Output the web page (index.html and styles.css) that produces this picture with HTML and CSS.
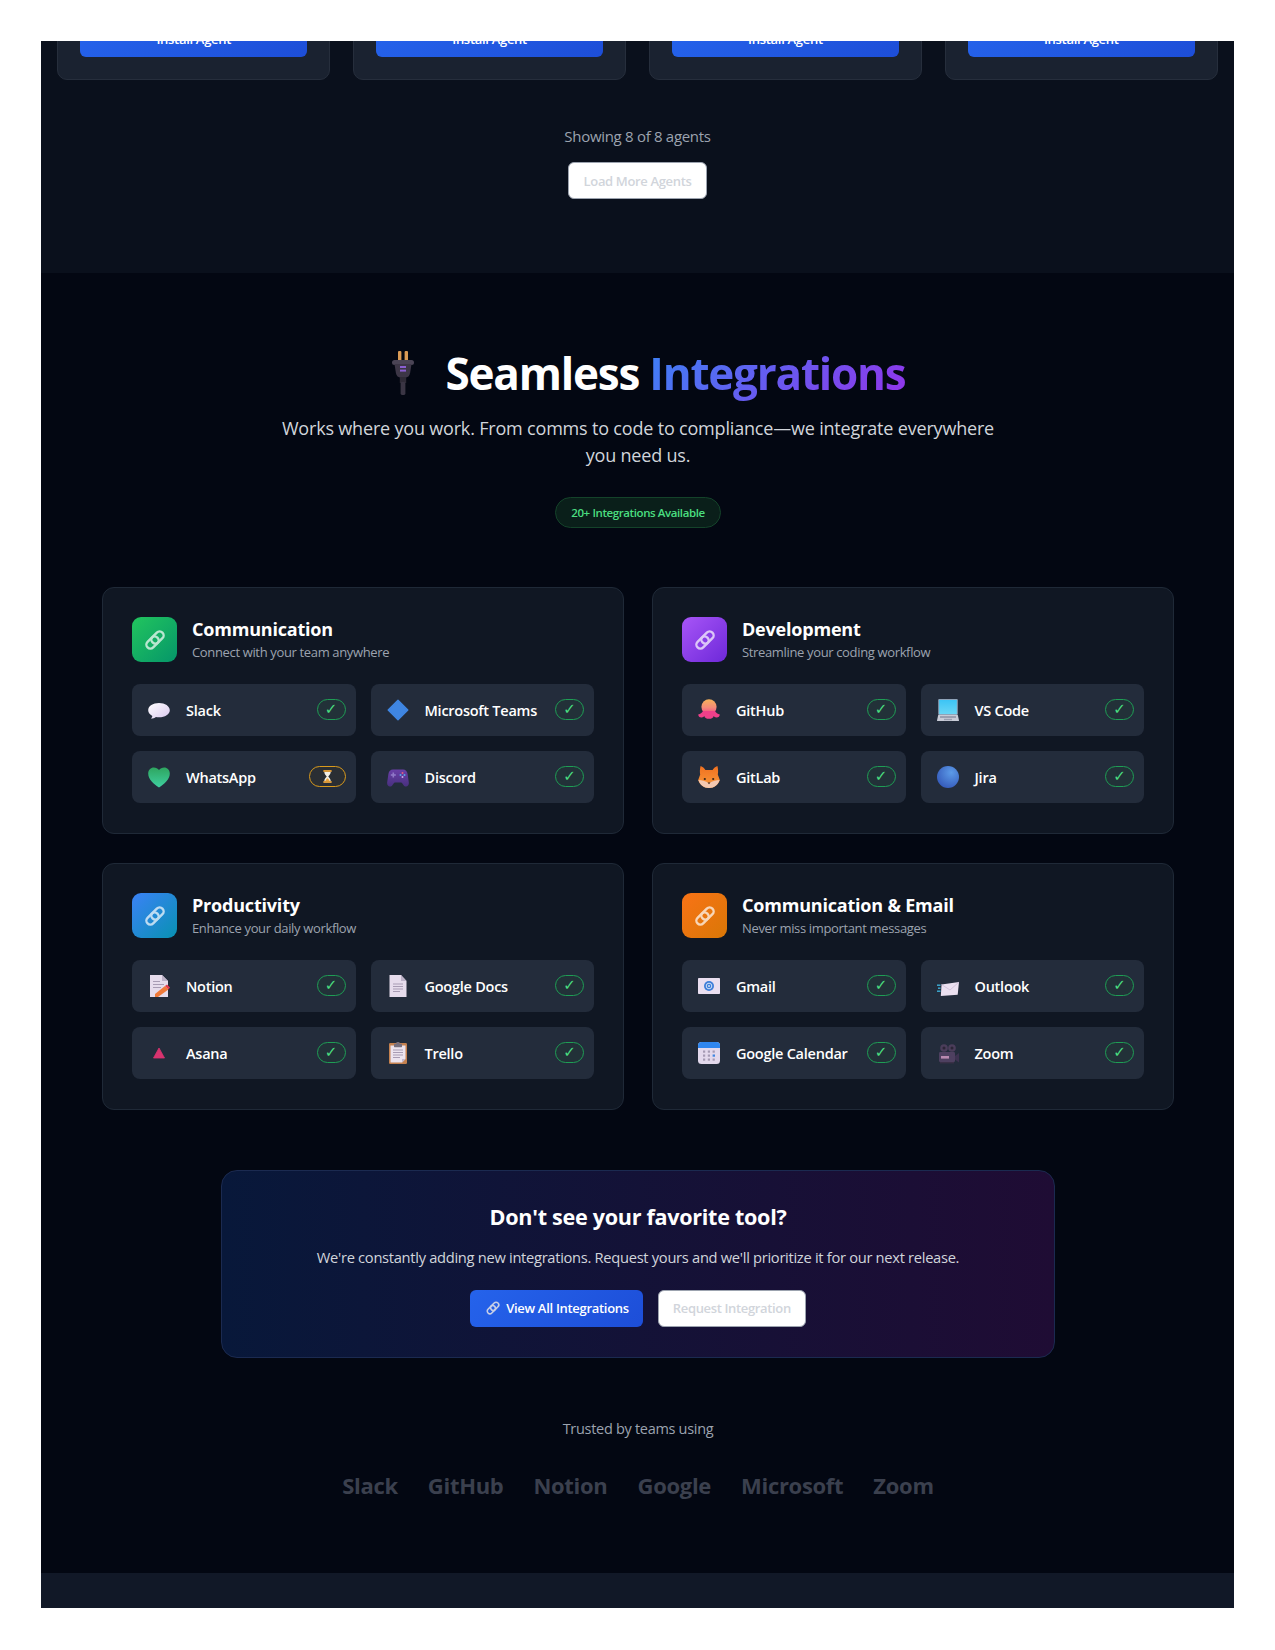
FILE: index.html
```html
<!DOCTYPE html>
<html lang="en">
<head>
<meta charset="UTF-8">
<meta name="viewport" content="width=device-width, initial-scale=1.0">
<title>Seamless Integrations</title>
<link rel="stylesheet" href="styles.css">
</head>
<body>
    <!-- shared icons -->
    <svg class="sprites" width="0" height="0" aria-hidden="true">
        <defs>
            <linearGradient id="gBubble" x1="0" y1="0" x2="1" y2="1"><stop offset="0" stop-color="#fff"/><stop offset="1" stop-color="#d9c8ee"/></linearGradient>
            <linearGradient id="gHeart" x1="0" y1="0" x2="0" y2="1"><stop offset="0" stop-color="#2ea55f"/><stop offset="1" stop-color="#3fd0a0"/></linearGradient>
            <linearGradient id="gOcto" x1="0" y1="0" x2="0" y2="1"><stop offset="0" stop-color="#f6b35a"/><stop offset=".55" stop-color="#f58a78"/><stop offset="1" stop-color="#f0408a"/></linearGradient>
            <linearGradient id="gScreen" x1="0" y1="0" x2="0" y2="1"><stop offset="0" stop-color="#3cc4f5"/><stop offset="1" stop-color="#69d6f5"/></linearGradient>
            <linearGradient id="gFox" x1="0" y1="0" x2="0" y2="1"><stop offset="0" stop-color="#f0701f"/><stop offset="1" stop-color="#f99a3c"/></linearGradient>
            <radialGradient id="gBall" cx=".65" cy=".3" r=".8"><stop offset="0" stop-color="#5c9be8"/><stop offset="1" stop-color="#3357b8"/></radialGradient>
            <linearGradient id="gPad" x1="0" y1="0" x2="0" y2="1"><stop offset="0" stop-color="#6a3fa8"/><stop offset="1" stop-color="#48307f"/></linearGradient>
            <symbol id="i-link" viewBox="0 0 24 24">
                <g fill="none" stroke="currentColor" stroke-width="2.4">
                    <rect x="10.5" y="2.5" width="8" height="14" rx="4" transform="rotate(45 14.5 9.500)"/>
                    <rect x="5.5" y="7.5" width="8" height="14" rx="4" transform="rotate(45 9.500 14.500)"/>
                </g>
            </symbol>
            <symbol id="i-plug" viewBox="0 0 22 44">
                <rect x="6" y="0" width="3.4" height="11" rx="1" fill="#d99a55"/>
                <rect x="12.6" y="0" width="3.4" height="11" rx="1" fill="#d99a55"/>
                <rect x="0" y="9" width="22" height="5" rx="2.5" fill="#4a4455"/>
                <path d="M2.5 13h17l-1.4 9q-.8 4-4.1 4.6H8q-3.3-.6-4.1-4.6z" fill="#3c3646"/>
                <rect x="8" y="15" width="6" height="2" fill="#8a5fd0"/>
                <rect x="8" y="18.6" width="6" height="2" fill="#8a5fd0"/>
                <rect x="7.8" y="26" width="6.4" height="6" fill="#2e2a36"/>
                <rect x="8.6" y="31" width="4.8" height="13" rx="1.4" fill="#3a3544"/>
            </symbol>
            <symbol id="i-bubble" viewBox="0 0 22 22">
                <path d="M11 4C5 4 .2 7.1.2 11.2c0 2.4 1.6 4.4 4.2 5.7-.2 1-.8 2-1.5 2.7 1.8 0 3.7-.7 5-1.6 1 .2 2 .3 3.1.3 6 0 10.8-3.1 10.8-7.1S17 4 11 4z" fill="url(#gBubble)"/>
            </symbol>
            <symbol id="i-diamond" viewBox="0 0 22 22">
                <path d="M11 1.2 20.8 11 11 20.8 1.2 11z" fill="#3f86e2" stroke="#3f86e2" stroke-width="1.4" stroke-linejoin="round"/>
            </symbol>
            <symbol id="i-heart" viewBox="0 0 22 22">
                <path d="M11 21.5C6 18 .2 13.500 .2 7.400.2 3.900 2.800 1.400 5.800 1.400c2.200 0 4 1 5.200 2.600 1.200-1.600 3-2.600 5.200-2.600 3 0 5.600 2.500 5.600 6 0 6.100-5.800 10.600-10.800 14.100z" fill="url(#gHeart)"/>
            </symbol>
            <symbol id="i-pad" viewBox="0 0 22 22">
                <path d="M6 3.600h10c2.600 0 4 1.600 4.600 4.400l1.200 8.200c.4 2.600-1 4.300-2.700 4.300-1.500 0-2.400-1-3.400-2.600-.6-1-1.300-1.400-2.400-1.400H8.700c-1.100 0-1.800.4-2.400 1.400-1 1.600-1.900 2.600-3.400 2.600-1.700 0-3.100-1.700-2.700-4.300L1.400 8C2 5.200 3.400 3.600 6 3.600z" fill="url(#gPad)"/>
                <circle cx="15.500" cy="7" r="1" fill="#e0607e"/><circle cx="17.500" cy="9" r="1" fill="#58a6e8"/><circle cx="13.500" cy="9" r="1" fill="#58a6e8"/><circle cx="15.500" cy="11" r="1" fill="#c9a9ee"/>
                <rect x="5.500" y="6.500" width="1.600" height="5" fill="#8f78c8"/><rect x="3.800" y="8.200" width="5" height="1.600" fill="#8f78c8"/>
            </symbol>
            <symbol id="i-octo" viewBox="0 0 22 22">
                <circle cx="11" cy="7.800" r="7.600" fill="url(#gOcto)"/>
                <path d="M5 12c-1 2-2.600 3-4.800 3.500.2 2 1.600 3.300 3.600 3 1.200-.2 2-.9 2.500-1.600.3 1.600 1.900 2.900 4.700 2.900s4.400-1.300 4.700-2.900c.5.700 1.300 1.400 2.500 1.600 2 .3 3.400-1 3.600-3C19.600 15 18 14 17 12z" fill="#f0408a"/>
            </symbol>
            <symbol id="i-laptop" viewBox="0 0 22 22">
                <rect x="1.200" y="0" width="19.600" height="16" rx="1" fill="#8fa3b8"/>
                <rect x="2.200" y="1" width="17.600" height="14" fill="url(#gScreen)"/>
                <path d="M1.200 16h19.600l1.200 5.400q0 .6-.6.6H.6q-.6 0-.6-.6z" fill="#c8cbd6"/>
                <rect x="3" y="17" width="16" height="2" fill="#9a9fb0"/>
                <rect x="7" y="19.800" width="8" height="1.400" fill="#9a9fb0"/>
            </symbol>
            <symbol id="i-fox" viewBox="0 0 22 22">
                <path d="M2.600 0c2 .8 3.700 2.200 4.800 3.900h7.200C15.700 2.200 17.400.8 19.400 0c.8 3 .9 6 .4 8.500l2 5.500c-1.500 4.600-5.400 8-10.800 8S1.700 18.600.2 14l2-5.500C1.700 6 1.800 3 2.600 0z" fill="url(#gFox)"/>
                <path d="M.4 14c3 .2 7 1 10.600 3.200C14.600 15 18.600 14.200 21.600 14c-1.500 4.900-5.400 8-10.600 8S1.900 18.900.4 14z" fill="#f4c9b2"/>
                <circle cx="6.800" cy="13" r="1.100" fill="#3a2418"/><circle cx="15.200" cy="13" r="1.100" fill="#3a2418"/>
                <path d="M9.600 16.600h2.800L11 18.200z" fill="#3a2418"/>
            </symbol>
            <symbol id="i-ball" viewBox="0 0 22 22"><circle cx="11" cy="11" r="11" fill="url(#gBall)"/></symbol>
            <symbol id="i-memo" viewBox="0 0 22 22">
                <path d="M2 0h12l6 6v16H2z" fill="#e6dcec"/><path d="M14 0l6 6h-6z" fill="#bdb2c8"/>
                <rect x="5" y="6" width="7" height="1" fill="#a89cb4"/><rect x="5" y="9" width="11" height="1" fill="#a89cb4"/><rect x="5" y="12" width="8" height="1" fill="#a89cb4"/>
                <path d="M7 19l10-8 3.400 3.400L10 22H7z" fill="#ef7a3a"/><path d="M17 11l2-1.500 3 3-1.600 1.900z" fill="#e23c4e"/>
            </symbol>
            <symbol id="i-page" viewBox="0 0 22 22">
                <path d="M2.500 0H14l5.500 6v16h-17z" fill="#e6dcec"/><path d="M14 0l5.500 6H14z" fill="#bdb2c8"/>
                <rect x="6" y="8.500" width="10" height="1" fill="#a89cb4"/><rect x="6" y="11" width="10" height="1" fill="#a89cb4"/><rect x="6" y="13.500" width="10" height="1" fill="#a89cb4"/><rect x="6" y="16" width="7" height="1" fill="#a89cb4"/>
            </symbol>
            <symbol id="i-tri" viewBox="0 0 22 22">
                <path d="M11 6 16.500 16H5.500z" fill="#d8336f" stroke="#d8336f" stroke-width=".8" stroke-linejoin="round"/>
            </symbol>
            <symbol id="i-clip" viewBox="0 0 22 22">
                <rect x="2" y="1" width="18" height="21" rx="1.200" fill="#c4814f"/>
                <path d="M3.500 3.500h15V17l-3.500 3.500H3.500z" fill="#ece4ef"/>
                <path d="M15 20.500V17h3.500z" fill="#c4b8cc"/>
                <rect x="7" y="1.800" width="8" height="3.400" rx=".6" fill="#77707e"/><rect x="9.500" y="0" width="3" height="2.500" rx=".6" fill="#77707e"/>
                <rect x="6" y="7.500" width="10" height="1" fill="#a89cb4"/><rect x="6" y="10" width="10" height="1" fill="#a89cb4"/><rect x="6" y="12.500" width="10" height="1" fill="#a89cb4"/><rect x="6" y="15" width="7" height="1" fill="#a89cb4"/>
            </symbol>
            <symbol id="i-mail" viewBox="0 0 22 22">
                <rect x="0" y="3" width="22" height="16" rx=".8" fill="#eadff0"/>
                <circle cx="11" cy="11" r="5" fill="#3f7fd8"/>
                <circle cx="11" cy="11" r="2.800" fill="none" stroke="#cfe0f8" stroke-width="1"/><circle cx="11" cy="11" r="1" fill="#cfe0f8"/>
            </symbol>
            <symbol id="i-inbox" viewBox="0 0 22 22">
                <path d="M4.500 9.500 22 7l-1.300 12.800L3.800 21z" fill="#ebe0f0"/>
                <path d="M4.500 9.500 13 15l9-8" fill="none" stroke="#cbbcd6" stroke-width=".8"/>
                <rect x="0" y="9.500" width="3.500" height="1.400" fill="#3eaed8"/><rect x="1" y="12.500" width="2.500" height="1.400" fill="#3eaed8"/><rect x="0" y="15.500" width="3.500" height="1.400" fill="#3eaed8"/>
            </symbol>
            <symbol id="i-cal" viewBox="0 0 22 22">
                <rect x="0" y="0" width="22" height="22" rx="3.500" fill="#e3d9ec"/>
                <path d="M0 6V3.500Q0 0 3.500 0h15Q22 0 22 3.500V6z" fill="#2f86ee"/>
                <g fill="#a59bb4">
                    <rect x="5" y="8.500" width="2.200" height="2.200"/><rect x="9.800" y="8.500" width="2.200" height="2.200"/><rect x="14.600" y="8.500" width="2.200" height="2.200"/>
                    <rect x="5" y="12.500" width="2.200" height="2.200"/><rect x="9.800" y="12.500" width="2.200" height="2.200"/>
                    <rect x="5" y="16.500" width="2.200" height="2.200"/><rect x="9.800" y="16.500" width="2.200" height="2.200"/><rect x="14.600" y="16.500" width="2.200" height="2.200"/>
                </g>
                <rect x="14.600" y="12.500" width="2.400" height="2.200" fill="#3f86e2"/>
            </symbol>
            <symbol id="i-cam" viewBox="0 0 22 22">
                <circle cx="7" cy="6" r="3.800" fill="#4b3d5a"/><circle cx="15" cy="6" r="3.800" fill="#4b3d5a"/>
                <circle cx="7" cy="6" r="1.500" fill="#2c2536"/><circle cx="15" cy="6" r="1.500" fill="#2c2536"/>
                <rect x="2" y="10" width="16" height="10" rx="1.200" fill="#4e4060"/>
                <path d="M18 14l4-3v9.500l-4-3z" fill="#3d3250"/>
                <rect x="4" y="14" width="8" height="2.600" fill="#b98ab0"/>
                <rect x="3" y="20" width="14" height="1.400" fill="#3a3046"/>
            </symbol>
            <symbol id="i-glass" viewBox="0 0 12 14">
                <rect x="1.500" y="0" width="9" height="2" fill="#e8a33c"/><rect x="1.500" y="12" width="9" height="2" fill="#e8a33c"/>
                <path d="M2.500 2h7c0 2.500-2 3.800-2.700 5 .7 1.200 2.700 2.500 2.700 5h-7c0-2.500 2-3.800 2.700-5C4.500 5.800 2.500 4.500 2.500 2z" fill="#f3efe6"/>
                <path d="M3.600 12c.3-1.500 1.500-2.400 2.400-3.200.9.800 2.100 1.700 2.400 3.200z" fill="#e8a33c"/>
            </symbol>
        </defs>
    </svg>

    <section class="agents">
        <div class="agent-grid">
            <div class="agent-card"><a class="btn btn-primary btn-block">Install Agent</a></div>
            <div class="agent-card"><a class="btn btn-primary btn-block">Install Agent</a></div>
            <div class="agent-card"><a class="btn btn-primary btn-block">Install Agent</a></div>
            <div class="agent-card"><a class="btn btn-primary btn-block">Install Agent</a></div>
        </div>
        <p class="agents-count">Showing 8 of 8 agents</p>
        <a class="btn btn-white load-more">Load More Agents</a>
    </section>

    <section class="integrations">
        <h2 class="title">
            <svg class="title-plug"><use href="#i-plug"/></svg>
            <span>Seamless <span class="gradient-text">Integrations</span></span>
        </h2>
        <p class="subtitle">Works where you work. From comms to code to compliance—we integrate everywhere you need us.</p>
        <span class="count-badge">20+ Integrations Available</span>

        <div class="category-grid">
            <div class="category">
                <div class="category-head">
                    <div class="category-icon green"><svg><use href="#i-link"/></svg></div>
                    <div><h3>Communication</h3><p>Connect with your team anywhere</p></div>
                </div>
                <div class="tool-grid">
                    <div class="tool"><svg class="tool-icon"><use href="#i-bubble"/></svg><span class="tool-name">Slack</span><span class="pill">✓</span></div>
                    <div class="tool"><svg class="tool-icon"><use href="#i-diamond"/></svg><span class="tool-name">Microsoft Teams</span><span class="pill">✓</span></div>
                    <div class="tool"><svg class="tool-icon"><use href="#i-heart"/></svg><span class="tool-name">WhatsApp</span><span class="pill pending"><svg><use href="#i-glass"/></svg></span></div>
                    <div class="tool"><svg class="tool-icon"><use href="#i-pad"/></svg><span class="tool-name">Discord</span><span class="pill">✓</span></div>
                </div>
            </div>
            <div class="category">
                <div class="category-head">
                    <div class="category-icon purple"><svg><use href="#i-link"/></svg></div>
                    <div><h3>Development</h3><p>Streamline your coding workflow</p></div>
                </div>
                <div class="tool-grid">
                    <div class="tool"><svg class="tool-icon"><use href="#i-octo"/></svg><span class="tool-name">GitHub</span><span class="pill">✓</span></div>
                    <div class="tool"><svg class="tool-icon"><use href="#i-laptop"/></svg><span class="tool-name">VS Code</span><span class="pill">✓</span></div>
                    <div class="tool"><svg class="tool-icon"><use href="#i-fox"/></svg><span class="tool-name">GitLab</span><span class="pill">✓</span></div>
                    <div class="tool"><svg class="tool-icon"><use href="#i-ball"/></svg><span class="tool-name">Jira</span><span class="pill">✓</span></div>
                </div>
            </div>
            <div class="category">
                <div class="category-head">
                    <div class="category-icon blue"><svg><use href="#i-link"/></svg></div>
                    <div><h3>Productivity</h3><p>Enhance your daily workflow</p></div>
                </div>
                <div class="tool-grid">
                    <div class="tool"><svg class="tool-icon"><use href="#i-memo"/></svg><span class="tool-name">Notion</span><span class="pill">✓</span></div>
                    <div class="tool"><svg class="tool-icon"><use href="#i-page"/></svg><span class="tool-name">Google Docs</span><span class="pill">✓</span></div>
                    <div class="tool"><svg class="tool-icon"><use href="#i-tri"/></svg><span class="tool-name">Asana</span><span class="pill">✓</span></div>
                    <div class="tool"><svg class="tool-icon"><use href="#i-clip"/></svg><span class="tool-name">Trello</span><span class="pill">✓</span></div>
                </div>
            </div>
            <div class="category">
                <div class="category-head">
                    <div class="category-icon orange"><svg><use href="#i-link"/></svg></div>
                    <div><h3>Communication &amp; Email</h3><p>Never miss important messages</p></div>
                </div>
                <div class="tool-grid">
                    <div class="tool"><svg class="tool-icon"><use href="#i-mail"/></svg><span class="tool-name">Gmail</span><span class="pill">✓</span></div>
                    <div class="tool"><svg class="tool-icon"><use href="#i-inbox"/></svg><span class="tool-name">Outlook</span><span class="pill">✓</span></div>
                    <div class="tool"><svg class="tool-icon"><use href="#i-cal"/></svg><span class="tool-name">Google Calendar</span><span class="pill">✓</span></div>
                    <div class="tool"><svg class="tool-icon"><use href="#i-cam"/></svg><span class="tool-name">Zoom</span><span class="pill">✓</span></div>
                </div>
            </div>
        </div>

        <div class="cta">
            <h3>Don't see your favorite tool?</h3>
            <p>We're constantly adding new integrations. Request yours and we'll prioritize it for our next release.</p>
            <div class="cta-buttons">
                <a class="btn btn-primary"><svg class="btn-icon"><use href="#i-link"/></svg>View All Integrations</a>
                <a class="btn btn-white">Request Integration</a>
            </div>
        </div>

        <p class="trusted">Trusted by teams using</p>
        <div class="logos">
            <span>Slack</span><span>GitHub</span><span>Notion</span><span>Google</span><span>Microsoft</span><span>Zoom</span>
        </div>
    </section>

    <footer class="footer"></footer>
</body>
</html>
```

FILE: styles.css
```css
* {
    box-sizing: border-box;
}
body {
    margin: 41px 41px 42px;
    background: #fff;
    font-family: "Open Sans", "Liberation Sans", sans-serif;
    letter-spacing: -0.3px;
    color: #fff;
}
.sprites {
    position: absolute;
}
h2, h3, p {
    margin: 0;
}

/* buttons */
.btn {
    display: inline-flex;
    align-items: center;
    justify-content: center;
    height: 37px;
    padding: 0 14px;
    border-radius: 6px;
    font-size: 13px;
    font-weight: 600;
}
.btn-primary {
    background: linear-gradient(135deg, #2563eb, #1d4ed8);
    color: #fff;
}
.btn-white {
    background: #fff;
    border: 1px solid #9ca3af;
    color: #d1d5db;
    letter-spacing: -0.35px;
}
.btn-block {
    display: flex;
}
.load-more {
    width: 139px;
    padding: 0;
}
.btn-icon {
    width: 16px;
    height: 16px;
    margin: 0 5px 0 1px;
    color: #c7cfe6;
}

/* agents strip */
.agents {
    height: 232px;
    padding: 0 16px;
    overflow: hidden;
    background: #0a101c;
    text-align: center;
}
.agent-grid {
    display: grid;
    grid-template-columns: repeat(4, 1fr);
    gap: 22.4px;
    margin-top: -44px;
}
.agent-card {
    padding: 22px;
    background: #1a2230;
    border: 1px solid #262e3c;
    border-radius: 10px;
}
.agents-count {
    margin: 45px 0 15px;
    font-size: 15px;
    line-height: 22px;
    color: #9ca3af;
}

/* integrations */
.integrations {
    padding: 72px 60px 73px 61px;
    background: #030712;
    text-align: center;
}
.title {
    display: flex;
    justify-content: center;
    align-items: center;
    gap: 32px;
    padding-left: 21px;
    font-size: 44px;
    font-weight: 700;
    line-height: 56px;
    letter-spacing: -1.2px;
}
.title-plug {
    width: 22px;
    height: 44px;
}
.gradient-text {
    background: linear-gradient(135deg, #3b82f6, #9333ea);
    -webkit-background-clip: text;
    background-clip: text;
    color: transparent;
}
.subtitle {
    width: 730px;
    margin: 14px auto 0;
    font-size: 18px;
    line-height: 27px;
    letter-spacing: -0.185px;
    color: #d1d5db;
}
.count-badge {
    display: inline-block;
    margin-top: 28px;
    padding: 0 15px;
    height: 31px;
    line-height: 29px;
    border: 1px solid #14432a;
    border-radius: 16px;
    background: #0a1f1a;
    font-size: 11.5px;
    font-weight: 600;
    letter-spacing: -0.4px;
    color: #4ade80;
}
.category-grid {
    display: grid;
    grid-template-columns: 1fr 1fr;
    gap: 29.5px 28px;
    margin-top: 59px;
    text-align: left;
}
.category {
    padding: 29px 29px 30px;
    background: #101723;
    border: 1px solid #1f2937;
    border-radius: 12px;
}
.category-head {
    display: flex;
    align-items: center;
    gap: 15px;
    margin-bottom: 21.5px;
}
.category-head h3 {
    font-size: 18px;
    font-weight: 700;
    line-height: 24px;
    letter-spacing: -0.2px;
}
.category-head p {
    margin-top: 1px;
    font-size: 13px;
    line-height: 20px;
    letter-spacing: -0.35px;
    color: #9ca3af;
}
.category-icon {
    display: flex;
    flex: none;
    align-items: center;
    justify-content: center;
    width: 45px;
    height: 44.5px;
    border-radius: 9px;
    color: #fff;
}
.category-icon svg {
    width: 24px;
    height: 24px;
    opacity: .7;
}
.green { background: linear-gradient(135deg, #22c55e, #059669); }
.purple { background: linear-gradient(135deg, #a855f7, #6d28d9); }
.blue { background: linear-gradient(135deg, #3b82f6, #0891b2); }
.orange { background: linear-gradient(135deg, #f97316, #d97706); }

.tool-grid {
    display: grid;
    grid-template-columns: 1fr 1fr;
    gap: 15px;
}
.tool {
    display: flex;
    align-items: center;
    height: 52px;
    padding: 0 10px 0 16px;
    background: #232c3b;
    border-radius: 8px;
}
.tool-icon {
    flex: none;
    width: 22px;
    height: 22px;
    margin-right: 16px;
}
.tool-name {
    flex: 1;
    margin-top: 1px;
    font-size: 14.5px;
    font-weight: 600;
    letter-spacing: -0.25px;
    white-space: nowrap;
}
.pill {
    display: flex;
    flex: none;
    align-items: center;
    justify-content: center;
    width: 29px;
    height: 21px;
    margin-top: -1px;
    border: 1px solid #1f9d55;
    border-radius: 11px;
    background: #223138;
    font-family: "DejaVu Sans", sans-serif;
    font-size: 15px;
    font-weight: 700;
    color: #4ade80;
}
.pending {
    width: 37px;
    border-color: #d99a1c;
    background: #2a2e33;
}
.pending svg {
    width: 11px;
    height: 13px;
}

/* call to action */
.cta {
    width: 834px;
    height: 188px;
    margin: 60px auto 0;
    padding: 30px 0;
    background: linear-gradient(90deg, #08183a, #1f0c34);
    border: 1px solid #1b2a50;
    border-radius: 16px;
}
.cta h3 {
    font-size: 21.6px;
    font-weight: 700;
    line-height: 32px;
}
.cta p {
    margin: 13px 0 22px;
    font-size: 14.7px;
    line-height: 22px;
    color: #d1d5db;
}
.cta-buttons {
    display: flex;
    justify-content: center;
    gap: 15px;
}

/* logos */
.trusted {
    margin-top: 60px;
    font-size: 14.5px;
    line-height: 22px;
    color: #9ca3af;
}
.logos {
    display: flex;
    justify-content: center;
    gap: 30px;
    margin-top: 30px;
    font-size: 22px;
    font-weight: 700;
    line-height: 30px;
    color: #3b404e;
}
.footer {
    height: 35px;
    background: #111827;
}
```
